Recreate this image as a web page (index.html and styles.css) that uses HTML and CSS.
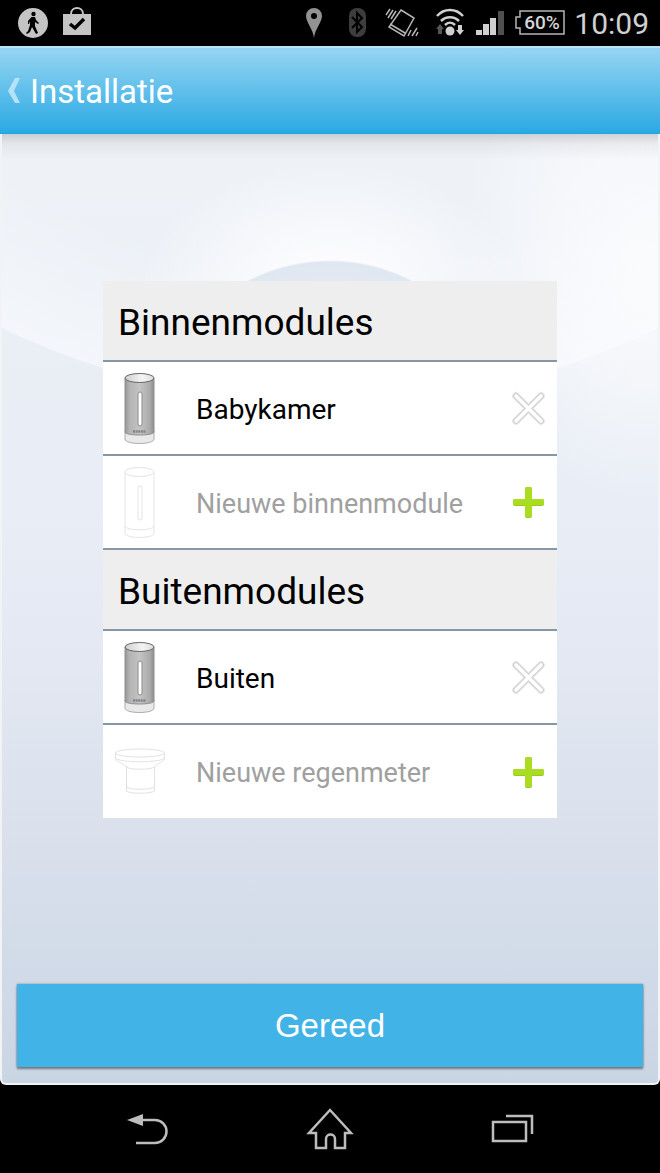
FILE: index.html
```html
<!DOCTYPE html>
<html lang="nl">
<head>
<meta charset="utf-8">
<meta name="viewport" content="width=device-width, initial-scale=1">
<title>Installatie</title>
<link rel="stylesheet" href="styles.css">
</head>

<body>
<!-- shared drawings -->
<svg class="defs" aria-hidden="true">
	<defs>
		<linearGradient id="metal" x1="0" x2="1" y1="0" y2="0">
			<stop offset="0" stop-color="#969696"/>
			<stop offset=".15" stop-color="#b3b3b3"/>
			<stop offset=".5" stop-color="#c4c4c4"/>
			<stop offset=".85" stop-color="#ababab"/>
			<stop offset="1" stop-color="#8e8e8e"/>
		</linearGradient>
		<linearGradient id="lid" x1="0" x2="1" y1="0" y2="0">
			<stop offset="0" stop-color="#cfcfcf"/>
			<stop offset=".6" stop-color="#f4f4f4"/>
			<stop offset="1" stop-color="#dcdcdc"/>
		</linearGradient>
	</defs>
	<symbol id="module" viewBox="0 0 54 74">
		<path d="M12 60v8c0 6 29 6 29 0v-8z" fill="#e9e9e9" stroke="#aaa"/>
		<path d="M12 7v54c0 4 29 4 29 0V7z" fill="url(#metal)" stroke="#8e8e8e"/>
		<ellipse cx="26.500" cy="7" rx="14.500" ry="4.500" fill="url(#lid)" stroke="#666"/>
		<rect x="25" y="21" width="4" height="34" rx="2" fill="#fff" stroke="#8a8a8a"/>
		<path d="M20 60.500h13" stroke="#7d858c" stroke-width="2.500" stroke-dasharray="2 .6"/>
	</symbol>
	<symbol id="module-empty" viewBox="0 0 54 74">
		<g fill="none" stroke="#e4e4e4">
			<path d="M12 7v61c0 6 29 6 29 0V7"/>
			<path d="M12 61c0 5 29 5 29 0"/>
			<ellipse cx="26.500" cy="7" rx="14.500" ry="4.500"/>
			<rect x="25" y="21" width="4" height="34" rx="2"/>
		</g>
	</symbol>
	<symbol id="rain-empty" viewBox="0 0 54 74">
		<g fill="none" stroke="#e2e2e2">
			<ellipse cx="27" cy="18" rx="24.500" ry="4"/>
			<path d="M2.500 18v6c0 2 9 5 11 8 3 3 24 3 28 0 2-3 10-6 10-8v-6"/>
			<path d="M2.500 23c4 5 45 5 49 0M13.500 31v25c3 3 24 3 28 0V31M13.500 52c3 3 24 3 28 0"/>
		</g>
	</symbol>
	<symbol id="cross" viewBox="0 0 36 36">
		<path d="M6 6l25 25M31 6L6 31" stroke="#ececec" stroke-width="8" stroke-linecap="round"/>
		<path d="M6 6l25 25M31 6L6 31" stroke="#d0d0d0" stroke-width="6" stroke-linecap="round"/>
		<path d="M6 6l25 25M31 6L6 31" stroke="#fff" stroke-width="3.600" stroke-linecap="round"/>
	</symbol>
	<symbol id="plus" viewBox="0 0 36 36">
		<path d="M17 3h3q2 0 2 2v10h10q2 0 2 2v3q0 2-2 2H22v10q0 2-2 2h-3q-2 0-2-2V22H5q-2 0-2-2v-3q0-2 2-2h10V5q0-2 2-2z" fill="#97cb1d"/>
		<path d="M17 3h3q2 0 2 2v10h10q2 0 2 2v2q0 2-2 2H22v10q0 2-2 2h-3q-2 0-2-2V21H5q-2 0-2-2v-2q0-2 2-2h10V5q0-2 2-2z" fill="#aadd22"/>
	</symbol>
</svg>

<div class="screen">

	<div class="status">
		<svg width="44" height="46" viewBox="0 0 44 46" aria-hidden="true">
			<circle cx="22" cy="23" r="15" fill="#c4c4c4"/>
			<circle cx="22.500" cy="14" r="2.200"/>
			<path d="M20.500 17h3.500l1 3 3 3-1 1-3-2v4l3 7-2 1-4-7-2 5-3 2-1-1 2-2 2-6v-4l-1 3h-1v-3z"/>
		</svg>
		<svg width="44" height="46" viewBox="0 0 44 46" aria-hidden="true">
			<path d="M16 14c0-8 12-8 12 0" fill="none" stroke="#c4c4c4" stroke-width="2"/>
			<path d="M8 14h28v21H8z" fill="#c4c4c4"/>
			<path d="M15 24l5 4 9-9" fill="none" stroke="#000" stroke-width="3.500"/>
		</svg>
		<span class="spacer"></span>
		<svg width="44" height="46" viewBox="0 0 44 46" aria-hidden="true">
			<path fill="#929292" fill-rule="evenodd" d="M22 8a8 8 0 0 1 8 8c0 6-7 13-8 22-1-9-8-16-8-22a8 8 0 0 1 8-8zm0 5a3 3 0 1 0 0 6 3 3 0 0 0 0-6z"/>
		</svg>
		<svg width="44" height="46" viewBox="0 0 44 46" aria-hidden="true">
			<rect x="13" y="8" width="17" height="29" rx="8" fill="#3d3d3d"/>
			<path d="M16 17l10 10-5 5V13l5 5-10 10" fill="none" stroke="#000" stroke-width="2"/>
		</svg>
		<svg width="44" height="46" viewBox="0 0 44 46" fill="none" stroke="#b5b5b5" stroke-width="1.500" aria-hidden="true">
			<path d="M21 10l13 8-10 18-15-9zM10 24l15 9"/>
			<path d="M10 9l-4 6M13 10l-5 8M16 11l-5 8M32 36l5-8M28 36l3-6M36 36l2-4"/>
		</svg>
		<svg width="44" height="46" viewBox="0 0 44 46" aria-hidden="true">
			<path d="M13 16c7-8 19-8 26 0M17 21c5-5 13-5 18 0M21 25c3-3 7-3 10 0" fill="none" stroke="#d0d0d0" stroke-width="2.500"/>
			<circle cx="26" cy="31" r="4.500" fill="#d0d0d0"/>
			<path d="M16 24l4 5h-2v5h-4v-5h-2z" fill="#555"/>
			<path d="M36 35l4-5h-2v-5h-4v5h-2z" fill="#d0d0d0"/>
		</svg>
		<svg width="44" height="46" viewBox="0 0 44 46" aria-hidden="true">
			<path d="M8 30h6v5H8zM15 24h6v11h-6zM22 18h6v17h-6z" fill="#d0d0d0"/>
			<path d="M30 11h6v24h-6z" fill="#505050"/>
		</svg>
		<svg class="battery" width="62" height="46" viewBox="0 0 62 46" role="img" aria-label="Batterij 60%">
			<path d="M8 11h44v23H8v-6H4V17h4z" fill="none" stroke="#b5b5b5" stroke-width="1.500"/>
			<text x="30" y="29" text-anchor="middle">60%</text>
		</svg>
		<time class="clock">10:09</time>
	</div>

	<header class="titlebar">
		<a class="back" href="#">
			<svg width="14" height="28" viewBox="0 0 14 28" aria-hidden="true"><path d="M8 1h5L7 14l6 12H8L1 14z" fill="#b5e2f6"/></svg>
			<h1>Installatie</h1>
		</a>
	</header>

	<main class="content">
		<div class="modules">
			<section>
				<h2>Binnenmodules</h2>
				<ul>
					<li>
						<svg class="device" aria-hidden="true"><use href="#module"/></svg>
						<span class="name">Babykamer</span>
						<button class="action" type="button" aria-label="Babykamer verwijderen"><svg><use href="#cross"/></svg></button>
					</li>
					<li class="new">
						<svg class="device" aria-hidden="true"><use href="#module-empty"/></svg>
						<span class="name">Nieuwe binnenmodule</span>
						<button class="action" type="button" aria-label="Binnenmodule toevoegen"><svg><use href="#plus"/></svg></button>
					</li>
				</ul>
			</section>
			<section>
				<h2>Buitenmodules</h2>
				<ul>
					<li>
						<svg class="device" aria-hidden="true"><use href="#module"/></svg>
						<span class="name">Buiten</span>
						<button class="action" type="button" aria-label="Buiten verwijderen"><svg><use href="#cross"/></svg></button>
					</li>
					<li class="new">
						<svg class="device" aria-hidden="true"><use href="#rain-empty"/></svg>
						<span class="name">Nieuwe regenmeter</span>
						<button class="action" type="button" aria-label="Regenmeter toevoegen"><svg><use href="#plus"/></svg></button>
					</li>
				</ul>
			</section>
		</div>
		<button class="done" type="button">Gereed</button>
	</main>

	<nav class="navbar">
		<button type="button" aria-label="Terug">
			<svg width="48" height="48" viewBox="0 0 48 48"><path d="M17 12h14a11 11 0 0 1 0 23H12" fill="none" stroke="#bdbdbd" stroke-width="2.500"/><path d="M3 12l16-6v12z" fill="#bdbdbd"/></svg>
		</button>
		<button type="button" aria-label="Home">
			<svg width="48" height="48" viewBox="0 0 48 48"><path d="M24 2l21 23h-6v15H29V31c0-6-9-6-9 0v9H10V25H3z" fill="none" stroke="#bdbdbd" stroke-width="2.500"/></svg>
		</button>
		<button type="button" aria-label="Recente apps">
			<svg width="48" height="48" viewBox="0 0 48 48" fill="none" stroke="#bdbdbd" stroke-width="2.500"><path d="M5 14h33v19H5zM18 8h26v18"/></svg>
		</button>
	</nav>

</div>
</body>
</html>
```
FILE: styles.css
```css
*{box-sizing:border-box;}
body{margin:0; background:#000; font-family:Roboto, "Liberation Sans", sans-serif;}
h1, h2, ul{margin:0; padding:0; font-weight:400;}
button{margin:0; padding:0; border:0; background:none; font:inherit; cursor:pointer;}
svg{display:block; flex:none;}
.defs{position:absolute; width:0; height:0;}

.screen{display:flex; flex-direction:column; min-height:100vh;}

/* status bar */
.status{display:flex; align-items:center; height:46px; padding:0 11px; background:#000;}
.spacer{flex:1;}
.battery text{font-size:19px; font-weight:500; fill:#d6d6d6;}
.clock{color:#d0d0d0; font-size:30px; line-height:44px; padding-top:2px;}

/* title bar */
.titlebar{
	height:88px;
	background:linear-gradient(#96d5f2, #2aa9e3);
	border-top:2px solid #b9e5f7;
	border-bottom:1px solid #1ca6e8;
}
.back{display:flex; align-items:center; gap:9px; height:100%; padding-left:7px; color:#fff; text-decoration:none;}
.back h1{font-size:33px; line-height:40px; padding-top:2px;}

/* content */
.content{
	flex:1;
	display:flex;
	flex-direction:column;
	justify-content:space-between;
	padding:147px 15px 16px;
	border:solid #f2f3f5;
	border-width:0 2px 2px;
	border-radius:0 0 6px 6px;
	background:
		linear-gradient(rgba(90,90,100,.24), rgba(90,90,100,.08) 10px, rgba(90,90,100,0) 26px) no-repeat,
		radial-gradient(circle at 50% 305px, #e9edf6 120px, #dfe7f1 177px, transparent 179px),
		radial-gradient(ellipse 190px 120px at 50% 150px, #fcfcfe 20%, rgba(252,252,254,0)),
		radial-gradient(ellipse 190px 240px at 98% 130px, rgba(253,253,254,.8), rgba(253,253,254,.5) 50%, rgba(253,253,254,0)),
		radial-gradient(circle at 50% -486px, rgba(250,251,255,0) 620px, rgba(250,251,255,.6) 754px, rgba(250,251,255,0) 756px),
		linear-gradient(#eff3f8, #e9eef5 26%, #e9edf6 40%, #e3e8f2 56%, #d9e0ec 75%, #cad5e4);
}
.modules{margin:0 86px; background:#fff;}
.modules h2{
	height:81px;
	padding-left:15px;
	background:#eee;
	border-bottom:2px solid #8797a5;
	color:#000;
	font-size:37px;
	line-height:84px;
}
.modules ul{list-style:none;}
.modules li{display:flex; align-items:center; height:94px; padding:0 11px 0 10px; border-bottom:2px solid #8797a5;}
.modules section:last-child li:last-child{height:93px; border-bottom:0;}
.device{width:54px; height:74px;}
.name{flex:1; padding:3px 0 0 29px; color:#000; font-size:28px; line-height:36px;}
.new .name{color:#a0a0a0; font-size:27px;}
.action svg{width:36px; height:36px;}

.done{
	height:83px;
	background:#42b3e7;
	box-shadow:0 2px 2px #77777b, 0 0 2px #8b8b90;
	color:#fff;
	font-family:"Liberation Sans", Arial, sans-serif;
	font-size:33px;
}

/* system buttons */
.navbar{display:flex; height:88px; padding:6px 57px 0; background:#000;}
.navbar button{flex:1; display:flex; align-items:center; justify-content:center;}
```
